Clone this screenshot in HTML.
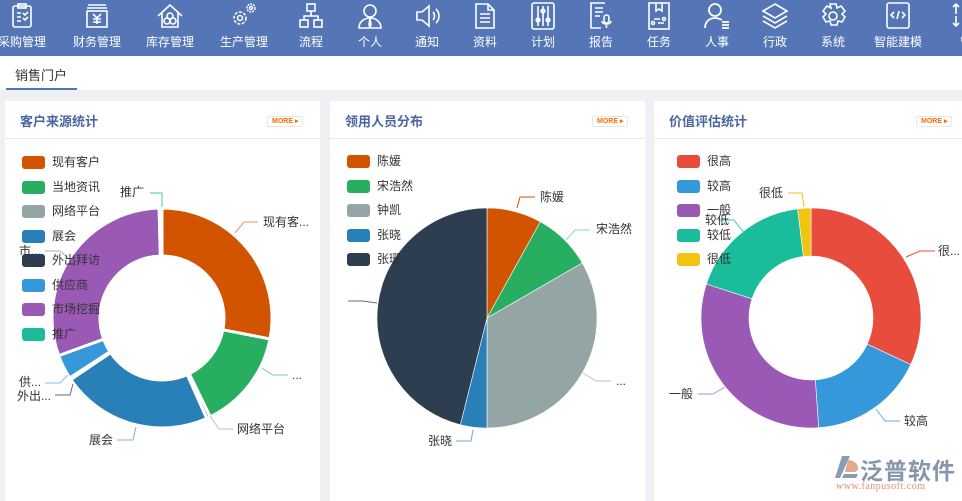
<!DOCTYPE html>
<html><head><meta charset="utf-8">
<style>
*{margin:0;padding:0;box-sizing:border-box}
body{width:962px;height:498px;overflow:hidden;background:#eef0f4;font-family:"Liberation Sans","Noto Sans CJK SC",sans-serif;position:relative}
.nav{position:absolute;left:0;top:0;width:962px;height:56px;background:#5476b6}
.ni{position:absolute;top:0;width:70px;margin-left:-35px;text-align:center;color:#fff;font-size:12px}
.ni svg{position:absolute;left:21px;top:2px}
.ni span{position:absolute;left:0;right:0;top:33px;white-space:nowrap}
.tabs{position:absolute;left:0;top:56px;width:962px;height:34px;background:#fff}
.tab{position:absolute;left:6px;top:0;width:71px;height:34px;border-bottom:2px solid #5476b6;font-size:13px;color:#333;padding:9px 0 0 9px}
.panel{position:absolute;top:101px;height:400px;background:#fff}
.ph{height:38px;border-bottom:1px solid #e8e8e8;position:relative}
.ph b{position:absolute;left:15px;top:10px;font-size:13px;color:#4a66a0;font-weight:bold}
.more{position:absolute;top:15px;width:36px;height:11px;border:1px solid #e6e6e6;border-radius:2px;font-size:7px;color:#ff6a00;font-weight:bold;line-height:10px;padding-left:4px}
.lg{position:absolute;font-size:12px;color:#333}
.lg div{height:24.5px;position:relative;padding-left:30px;line-height:14px}
.lg i{position:absolute;left:0;top:1px;width:23px;height:13px;border-radius:3px}
svg text{font-family:"Liberation Sans","Noto Sans CJK SC",sans-serif;font-size:12px;fill:#333}
</style></head><body>
<div class="nav">
<div class="ni" style="left:22px"><svg width="28" height="28" viewBox="0 0 28 28" fill="none" stroke="#fff" stroke-width="1.6"><rect x="5" y="4" width="18" height="21" rx="2"/><rect x="10" y="2" width="8" height="4"/><path d="M9 11h4M9 15h4M9 19h4M15 11l2 2 3-3M15 16l2 2 3-3"/></svg><span>采购管理</span></div>
<div class="ni" style="left:97px"><svg width="28" height="28" viewBox="0 0 28 28" fill="none" stroke="#fff" stroke-width="1.6"><path d="M5 3h18M4 6h20"/><rect x="4" y="9" width="20" height="16"/><path d="M10 12l4 4 4-4M14 16v6M10 17h8M10 20h8"/></svg><span>财务管理</span></div>
<div class="ni" style="left:170px"><svg width="28" height="28" viewBox="0 0 28 28" fill="none" stroke="#fff" stroke-width="1.6"><path d="M2 14L14 3l12 11M6 11v14h16V11"/><circle cx="14" cy="14" r="3"/><circle cx="11" cy="19" r="3"/><circle cx="17" cy="19" r="3"/></svg><span>库存管理</span></div>
<div class="ni" style="left:244px"><svg width="28" height="28" viewBox="0 0 28 28" fill="none" stroke="#fff" stroke-width="1.5"><circle cx="10" cy="16" r="6" stroke-dasharray="3 1.5"/><circle cx="10" cy="16" r="2.5"/><circle cx="21" cy="6" r="4" stroke-dasharray="2 1"/><circle cx="21" cy="6" r="1.5"/></svg><span>生产管理</span></div>
<div class="ni" style="left:311px"><svg width="28" height="28" viewBox="0 0 28 28" fill="none" stroke="#fff" stroke-width="1.6"><rect x="10" y="2" width="8" height="7"/><rect x="3" y="18" width="8" height="7"/><rect x="17" y="18" width="8" height="7"/><path d="M14 9v5M7 18v-4h14v4"/></svg><span>流程</span></div>
<div class="ni" style="left:370px"><svg width="28" height="28" viewBox="0 0 28 28" fill="none" stroke="#fff" stroke-width="1.6"><circle cx="14" cy="9" r="6"/><path d="M3 26c0-6 5-10 11-10s11 4 11 10zM14 16l-1 7 1 2 1-2z"/></svg><span>个人</span></div>
<div class="ni" style="left:427px"><svg width="28" height="28" viewBox="0 0 28 28" fill="none" stroke="#fff" stroke-width="1.6"><path d="M4 10h5l7-6v20l-7-6H4zM20 10c2 2 2 6 0 8M23 7c4 4 4 10 0 14"/></svg><span>通知</span></div>
<div class="ni" style="left:485px"><svg width="28" height="28" viewBox="0 0 28 28" fill="none" stroke="#fff" stroke-width="1.6"><path d="M5 2h12l6 6v18H5zM17 2v6h6M9 12h10M9 16h10M9 20h10"/></svg><span>资料</span></div>
<div class="ni" style="left:543px"><svg width="28" height="28" viewBox="0 0 28 28" fill="none" stroke="#fff" stroke-width="1.6"><rect x="3" y="1" width="22" height="26" rx="2"/><path d="M9 4v20M14 4v20M19 4v20"/><circle cx="9" cy="18" r="1.8"/><circle cx="14" cy="9" r="1.8"/><circle cx="19" cy="18" r="1.8"/></svg><span>计划</span></div>
<div class="ni" style="left:601px"><svg width="28" height="28" viewBox="0 0 28 28" fill="none" stroke="#fff" stroke-width="1.6"><path d="M18 1H4v25h10M8 6h8M8 10h8M8 14h5"/><rect x="17" y="13" width="5" height="8" rx="2.5"/><path d="M15 19c0 4 9 4 9 0M19.5 23v3"/></svg><span>报告</span></div>
<div class="ni" style="left:659px"><svg width="28" height="28" viewBox="0 0 28 28" fill="none" stroke="#fff" stroke-width="1.6"><rect x="4" y="1" width="20" height="26"/><path d="M11 1v8l3-2 3 2V1M9 17h6M13 21h6"/><circle cx="8" cy="21" r="1.5"/><circle cx="19" cy="17" r="1.5"/></svg><span>任务</span></div>
<div class="ni" style="left:717px"><svg width="28" height="28" viewBox="0 0 28 28" fill="none" stroke="#fff" stroke-width="1.8"><circle cx="12" cy="8" r="6"/><path d="M2 26c0-6 4-10 10-10 3 0 5 1 7 2M19 20h7M19 23h7M19 26h7"/></svg><span>人事</span></div>
<div class="ni" style="left:775px"><svg width="28" height="28" viewBox="0 0 28 28" fill="none" stroke="#fff" stroke-width="1.6"><path d="M14 2l12 7-12 7L2 9zM2 14l12 7 12-7M2 19l12 7 12-7"/></svg><span>行政</span></div>
<div class="ni" style="left:833px"><svg width="28" height="28" viewBox="0 0 28 28" fill="none" stroke="#fff" stroke-width="1.6"><path d="M11 2h6l1 4 4-2 4 5-3 3 3 3-3 5-4-1-1 4h-6l-1-4-4 1-3-5 3-3-3-3 4-5 4 2z"/><circle cx="14" cy="14" r="4"/></svg><span>系统</span></div>
<div class="ni" style="left:898px"><svg width="28" height="28" viewBox="0 0 28 28" fill="none" stroke="#fff" stroke-width="1.6"><rect x="3" y="1" width="22" height="25" rx="2"/><path d="M10 10l-3 3 3 3M18 10l3 3-3 3M15 9l-2 8"/></svg><span>智能建模</span></div>
<div class="ni" style="left:966px"><svg width="28" height="28" viewBox="0 0 28 28" fill="none" stroke="#fff" stroke-width="1.6"><path d="M4 12V2M1 5l3-3 3 3M4 14v10M1 21l3 3 3-3"/></svg><span>管</span></div>
</div>
<div class="tabs"><div class="tab">销售门户</div>
<svg style="position:absolute;left:933px;top:66px" width="14" height="14" viewBox="0 0 14 14" fill="none" stroke="#555" stroke-width="1.5"><circle cx="4.5" cy="4.5" r="3"/><path d="M7 7l6 6M10 10l-2 2M12 12l-1 1"/></svg>
</div>

<div class="panel" style="left:5px;width:315px"><div class="ph"><b>客户来源统计</b><div class="more" style="left:262px">MORE ▸</div></div></div>
<div class="panel" style="left:330px;width:315px"><div class="ph"><b>领用人员分布</b><div class="more" style="left:262px">MORE ▸</div></div></div>
<div class="panel" style="left:654px;width:320px"><div class="ph"><b>价值评估统计</b><div class="more" style="left:262px">MORE ▸</div></div></div>

<svg id="ch" style="position:absolute;left:0;top:0" width="962" height="498"></svg>

<div class="lg" style="left:22px;top:155px">
<div><i style="background:#d35400"></i>现有客户</div><div><i style="background:#27ae60"></i>当地资讯</div><div><i style="background:#95a5a6"></i>网络平台</div><div><i style="background:#2980b9"></i>展会</div><div><i style="background:#2c3e50"></i>外出拜访</div><div><i style="background:#3498db"></i>供应商</div><div><i style="background:#9b59b6"></i>市场挖掘</div><div><i style="background:#1abc9c"></i>推广</div></div>
<div class="lg" style="left:347px;top:154px">
<div><i style="background:#d35400"></i>陈媛</div><div><i style="background:#27ae60"></i>宋浩然</div><div><i style="background:#95a5a6"></i>钟凯</div><div><i style="background:#2980b9"></i>张晓</div><div><i style="background:#2c3e50"></i>张珊</div></div>
<div class="lg" style="left:677px;top:154px">
<div><i style="background:#e74c3c"></i>很高</div><div><i style="background:#3498db"></i>较高</div><div><i style="background:#9b59b6"></i>一般</div><div><i style="background:#1abc9c"></i>较低</div><div><i style="background:#f1c40f"></i>很低</div></div>

<div style="position:absolute;left:832px;top:452px;width:130px;height:46px">
<svg style="position:absolute;left:2px;top:2px" width="26" height="26" viewBox="0 0 26 26"><path d="M8 2h8L6 24H1z" fill="#8a9bb5"/><path d="M14 6c6 0 10 4 10 8s-3 4-7 4h-6z" fill="#e2a98a"/><path d="M10 20h14l-2 4H8z" fill="#8a9bb5"/></svg>
<div style="position:absolute;left:28px;top:0;font-size:23px;color:#8796ad;font-weight:bold;letter-spacing:1px;white-space:nowrap">泛普软件</div>
<div style="position:absolute;left:4px;top:29px;font-size:10px;color:#e0906a;font-family:'Liberation Serif',serif;white-space:nowrap;letter-spacing:0.5px">www.fanpusoft.com</div>
</div>

<script>
var s=document.getElementById('ch'),ns='http://www.w3.org/2000/svg';
function P(cx,cy,r,a){a=a*Math.PI/180;return [cx+r*Math.sin(a),cy-r*Math.cos(a)];}
function arc(cx,cy,R,r,a0,a1,c,sw){var l=(a1-a0)>180?1:0,p0=P(cx,cy,R,a0),p1=P(cx,cy,R,a1),d;
if(r>0){var q1=P(cx,cy,r,a1),q0=P(cx,cy,r,a0);d='M'+p0+'A'+R+','+R+' 0 '+l+' 1 '+p1+'L'+q1+'A'+r+','+r+' 0 '+l+' 0 '+q0+'Z';}
else d='M'+cx+','+cy+'L'+p0+'A'+R+','+R+' 0 '+l+' 1 '+p1+'Z';
var e=document.createElementNS(ns,'path');e.setAttribute('d',d);e.setAttribute('fill',c);e.setAttribute('stroke','#fff');e.setAttribute('stroke-width',sw);e.setAttribute('stroke-linejoin','round');s.appendChild(e);}
function segs(cx,cy,R,r,list,sw){for(var i=0;i<list.length;i++)arc(cx,cy,R,r,list[i][0],list[i][1],list[i][2],sw);}
segs(162,318,110,62,[[0,101,'#d35400'],[101,154,'#27ae60'],[154,156,'#95a5a6'],[156,236,'#2980b9'],[236,237,'#2c3e50'],[237,250,'#3498db'],[250,358.5,'#9b59b6'],[358.5,360,'#1abc9c']],3);
segs(487,318,110,0,[[0,29,'#d35400'],[29,60,'#27ae60'],[60,180,'#95a5a6'],[180,194,'#2980b9'],[194,360,'#2c3e50']],0.6);
segs(811,318,110,62,[[0,115,'#e74c3c'],[115,176,'#3498db'],[176,288,'#9b59b6'],[288,353,'#1abc9c'],[353,360,'#f1c40f']],0.6);
function ln(pts,c){var e=document.createElementNS(ns,'polyline');e.setAttribute('points',pts);e.setAttribute('fill','none');e.setAttribute('stroke',c);s.appendChild(e);}
function tx(x,y,t,a){var e=document.createElementNS(ns,'text');e.setAttribute('x',x);e.setAttribute('y',y);if(a)e.setAttribute('text-anchor',a);e.textContent=t;s.appendChild(e);}
ln('235,233 244,222 258,222','#e59866');tx(263,226,'现有客...');
ln('262,368 273,375 288,375','#7dcea0');tx(292,379,'...');
ln('210,416 219,429 233,429','#bdc3c7');tx(237,433,'网络平台');
ln('136,427 133,440 117,440','#7fb3d5');tx(113,444,'展会','end');
ln('73,384 70,395 55,395','#5d6d7e');tx(51,400,'外出...','end');
ln('68,375 60,383 45,383','#85c1e9');tx(41,386,'供...','end');
ln('68,258 60,251 45,251','#c39bd3');tx(41,255,'市...','end');
ln('162,207 162,193 150,193','#48c9b0');tx(144,196,'推广','end');
ln('517,208 520,197 535,197','#d35400');tx(540,201,'陈媛');
ln('566,240 575,230 590,230','#82e0aa');tx(596,233,'宋浩然');
ln('583,373 596,381 611,381','#bdc3c7');tx(616,385,'...');
ln('473,430 471,441 456,441','#5dade2');tx(452,445,'张晓','end');
ln('377,303 362,301 348,301','#5d6d7e');
ln('906,257 920,251 935,251','#e74c3c');tx(938,255,'很...');
ln('876,409 885,421 900,421','#5dade2');tx(904,425,'较高');
ln('725,387 713,394 698,394','#bb8fce');tx(693,398,'一般','end');
ln('744,233 734,220 718,220','#48c9b0');tx(729,224,'较低','end');
ln('804,207 802,193 788,193','#f1c40f');tx(783,197,'很低','end');
</script>
</body></html>
